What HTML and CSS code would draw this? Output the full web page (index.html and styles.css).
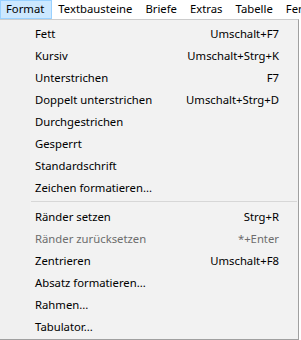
FILE: index.html
```html
<!DOCTYPE html>
<html lang="de">
<head>
    <meta charset="UTF-8">
    <link rel="stylesheet" href="styles.css">
</head>
<body>
    <div class="menubar">
        <span class="menubar-item active">Format</span>
        <span class="menubar-item">Textbausteine</span>
        <span class="menubar-item">Briefe</span>
        <span class="menubar-item">Extras</span>
        <span class="menubar-item">Tabelle</span>
        <span class="menubar-item">Fenster</span>
    </div>

    <div class="menu">
        <div class="menu-item"><span>Fett</span><span class="key">Umschalt+F7</span></div>
        <div class="menu-item"><span>Kursiv</span><span class="key">Umschalt+Strg+K</span></div>
        <div class="menu-item"><span>Unterstrichen</span><span class="key">F7</span></div>
        <div class="menu-item"><span>Doppelt unterstrichen</span><span class="key">Umschalt+Strg+D</span></div>
        <div class="menu-item"><span>Durchgestrichen</span></div>
        <div class="menu-item"><span>Gesperrt</span></div>
        <div class="menu-item"><span>Standardschrift</span></div>
        <div class="menu-item"><span>Zeichen formatieren...</span></div>
        <div class="separator"></div>
        <div class="menu-item"><span>Ränder setzen</span><span class="key">Strg+R</span></div>
        <div class="menu-item disabled"><span>Ränder zurücksetzen</span><span class="key">*+Enter</span></div>
        <div class="menu-item"><span>Zentrieren</span><span class="key">Umschalt+F8</span></div>
        <div class="menu-item"><span>Absatz formatieren...</span></div>
        <div class="menu-item"><span>Rahmen...</span></div>
        <div class="menu-item"><span>Tabulator...</span></div>
    </div>
</body>
</html>
```

FILE: styles.css
```css
body {
    margin: 0;
    font-family: "Segoe UI", "Noto Sans", sans-serif;
    font-size: 11.3px;
    color: #000;
    background-color: #fff;
    overflow: hidden;
}

.menubar {
    display: flex;
    height: 19px;
    white-space: nowrap;
    background-color: #fff;
    overflow: hidden;
}

.menubar-item {
    padding: 0 6px 0 5px;
    border: 1px solid transparent;
    box-sizing: border-box;
    height: 19px;
    line-height: 16px;
}

.menubar-item.active {
    padding-right: 7px;
    background-color: #cce8ff;
    border-color: #99d1ff;
}

.menu {
    width: 299px;
    height: 321px;
    box-sizing: border-box;
    padding: 2px 0;
    border-top: 1px solid #ccc;
    border-right: 1px solid #a0a0a0;
    border-bottom: 1px solid #a0a0a0;
    background: linear-gradient(to right, #f0f0f0 30px, #f2f2f2 30px);
}

.menu-item {
    display: flex;
    justify-content: space-between;
    height: 22px;
    line-height: 23px;
    padding: 0 19px 0 35px;
}

.menu-item.disabled {
    color: #6d6d6d;
}

.separator {
    height: 1px;
    margin: 3px 1px 3px 31px;
    background-color: #d7d7d7;
}
```
